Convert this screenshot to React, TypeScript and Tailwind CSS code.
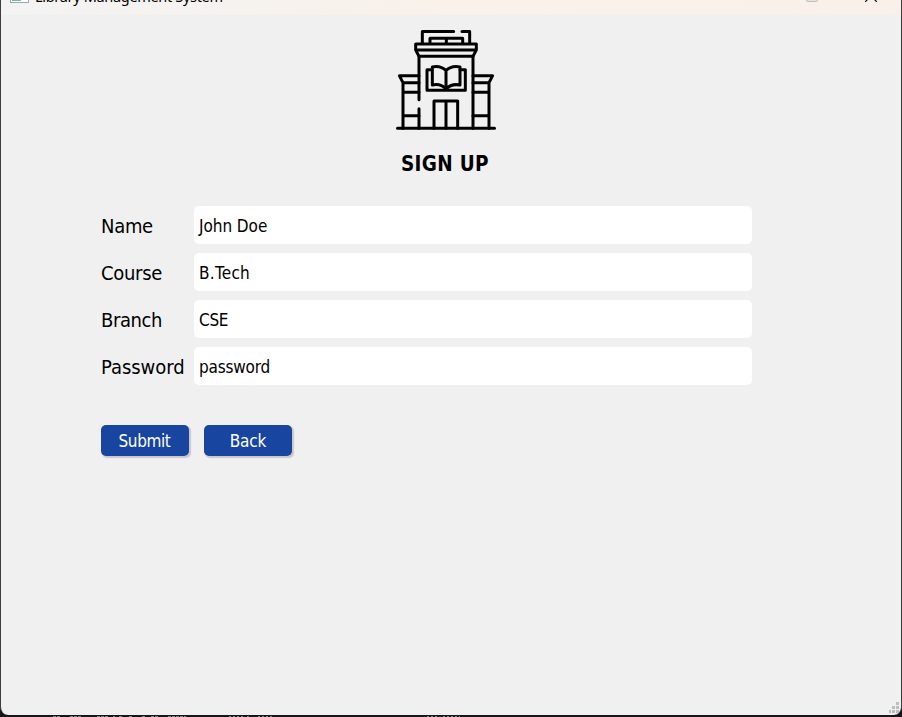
import React from "react";

const fields = [
  { label: "Name", value: "John Doe", l: "tracking-[-0.3px]", v: "tracking-[-0.05px]" },
  { label: "Course", value: "B.Tech", l: "tracking-[-0.3px]", v: "tracking-[0.3px]" },
  { label: "Branch", value: "CSE", l: "tracking-[-0.4px]", v: "tracking-[-0.3px]" },
  { label: "Password", value: "password", l: "tracking-[-0.05px]", v: "tracking-[-0.2px]" },
];

function LibraryIcon() {
  return (
    <svg
      className="block h-[100px] w-[100px]"
      viewBox="30 30 300 300"
      fill="none"
      stroke="#000"
      strokeWidth="9"
      strokeLinecap="round"
      strokeLinejoin="round"
    >
      <path d="M34.5 325H325.5" />
      <path d="M109 68V34.5H203M228 34.5H251V68" />
      <path d="M132 68V55H230V68M181 55V68" />
      <path d="M89 72H271V90L261 109H99L89 90ZM89 90H271" />
      <path d="M99 109V239M99 266V325M261 109V325" />
      <path d="M99 167H40L51 188H99M51 188V325M51 217H99M51 287H99" />
      <path d="M261 167H320L309 188H261M309 188V325M261 217H309M261 287H309" />
      <path d="M144 325V243H215V325M180 243V325" />
      <path d="M138 149H123V211H238V149H222" />
      <path d="M180 152C168 140 153 138 139 141V195C154 192 169 195 180 207C191 195 206 192 222 195V141C207 138 192 140 180 152ZM180 152V207" />
    </svg>
  );
}

export default function App() {
  return (
    <div className="relative h-[717px] w-[902px] overflow-hidden bg-[#17151a] font-['DejaVu_Sans_Condensed','DejaVu_Sans',sans-serif] text-black">
      <div className="relative flex h-[715px] w-[902px] flex-col overflow-hidden rounded-b-[8px] border-x border-[#3d3c3f] bg-[#f0f0f0]">
        <header className="relative h-[15px] shrink-0 overflow-hidden bg-linear-to-r from-[#f3f3f3] via-[#f9f1ea] via-50% to-[#f9f0e9]">
          <div className="absolute top-[-12px] left-[9px] h-[15px] w-[19px] border border-[#9da8b3] bg-white p-px">
            <div className="h-full w-[9px] bg-[#7fb5a5]" />
          </div>
          <span className="absolute top-[-14px] left-[34px] font-['Noto_Sans',sans-serif] text-[14.5px] leading-[20px] tracking-[-0.32px] whitespace-nowrap">
            Library Management System
          </span>
          <div className="absolute top-[-9px] left-[805px] h-[11px] w-[12px] rounded-[2px] border border-[#c4beb9] bg-[#e9e3dd]" />
          <svg className="absolute top-[-10px] left-[864px] h-[12px] w-[12px]" viewBox="0 0 12 12" stroke="#111" strokeWidth="1.2">
            <path d="M0 0L12 12M12 0L0 12" />
          </svg>
        </header>

        <main className="flex flex-col pt-[15px] pl-[100px]">
          <div className="ml-[295px] w-[100px]">
            <LibraryIcon />
          </div>
          <h1 className="mt-[22px] ml-[300px] text-[20.5px] leading-[24px] font-bold tracking-[0.3px] whitespace-nowrap">SIGN UP</h1>

          <form className="mt-[30px] flex flex-col gap-[9px]">
            {fields.map((f) => (
              <div key={f.label} className="flex h-[38px] items-center">
                <label className={`w-[93px] shrink-0 pt-[2px] text-[20px] leading-[24px] ${f.l}`}>{f.label}</label>
                <div className={`flex h-full w-[558px] items-center rounded-[5px] bg-white pt-[2px] pl-[5px] text-[17px] leading-[20px] ${f.v}`}>
                  {f.value}
                </div>
              </div>
            ))}
          </form>

          <div className="mt-[40px] flex gap-[15px] text-[17px] leading-[20px] text-white">
            <button className="flex h-[31px] w-[88px] items-center justify-center rounded-[5px] bg-[#1845a0] pr-px tracking-[-0.4px] shadow-[1.5px_1.5px_1px_#c9c9cc]">
              Submit
            </button>
            <button className="flex h-[31px] w-[88px] items-center justify-center rounded-[5px] bg-[#1845a0] tracking-[-0.2px] shadow-[1.5px_1.5px_1px_#c9c9cc]">
              Back
            </button>
          </div>
        </main>

        <svg className="absolute right-[2px] bottom-[2px] h-[11px] w-[10px]" viewBox="0 0 10 11" fill="#bdbdbd" shapeRendering="crispEdges">
          <path d="M7 0h3v3h-3zM3 4h3v3h-3zM7 4h3v3h-3zM0 8h2v3h-2zM3 8h3v3h-3zM7 8h3v3h-3z" />
        </svg>
      </div>
      {/* tops of the lettering in the dark window behind */}
      <svg className="block h-[2px] w-[902px]" viewBox="0 0 902 2" stroke="#7b8088" strokeWidth="1">
        <path d="M53 1.5H60M70 1.5H82M97 1.5H108M113 1.5H115M119 1.5H122M129 1.5H133M142 1.5H146M151 1.5H159M168 1.5H186" strokeDasharray="3 1" />
        <path d="M229 1.5H243M247 1.5H249M258 1.5H272M427 1.5H438M443 1.5H460" strokeDasharray="2 2" />
      </svg>
    </div>
  );
}
